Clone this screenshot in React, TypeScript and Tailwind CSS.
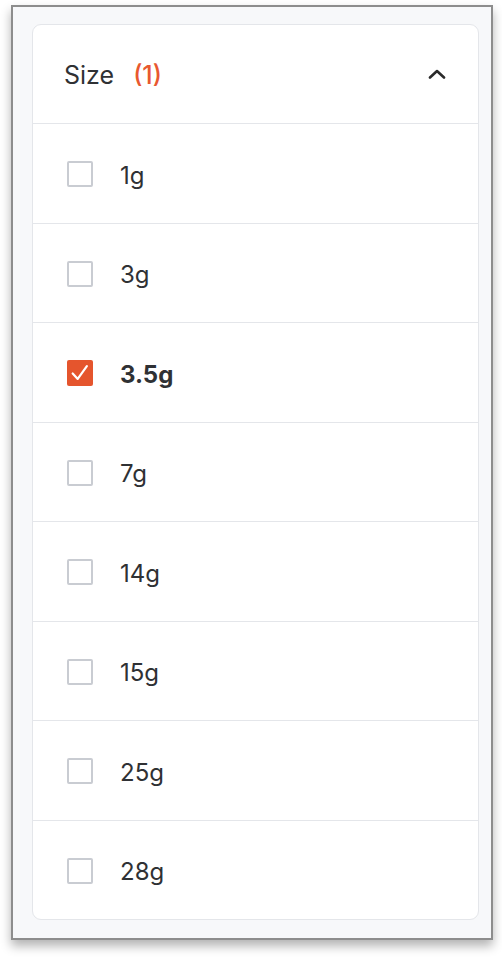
import React, { useState } from "react"

const sizes = ["1g", "3g", "3.5g", "7g", "14g", "15g", "25g", "28g"]

function Checkbox({ checked }: { checked: boolean }) {
  if (checked) {
    return (
      <span className="flex h-[26px] w-[26px] shrink-0 items-center justify-center rounded-[2px] bg-[#e5552d]">
        <svg viewBox="0 0 24 24" className="h-[22px] w-[22px]" fill="none" stroke="white" strokeWidth="2.4" strokeLinecap="round" strokeLinejoin="round">
          <polyline points="4,12.5 9.5,18.5 19.5,4.5" />
        </svg>
      </span>
    )
  }
  return <span className="h-[26px] w-[26px] shrink-0 rounded-[2px] border-2 border-[#c9ccd2] bg-white" />
}

export default function App() {
  const [selected, setSelected] = useState<string[]>(["3.5g"])

  const toggle = (s: string) =>
    setSelected((prev) => (prev.includes(s) ? prev.filter((x) => x !== s) : [...prev, s]))

  return (
    <div className="min-h-[958px] bg-white pl-[11px] pt-[5px]" style={{ fontFamily: "Inter, 'Noto Sans', sans-serif" }}>
      <div className="h-[935px] w-[482px] border-2 border-[#8d8d8d] bg-[#f7f8fa] pl-[19px] pr-[12px] pt-[17px] shadow-[0_6px_10px_rgba(0,0,0,0.3)]">
        <div className="overflow-hidden rounded-[9px] border border-[#e4e6ea] bg-white">
          {/* Header */}
          <div className="flex h-[98px] items-center justify-between pl-[31px] pr-[32px] pt-[4px]">
            <div className="flex items-center text-[25px] text-[#2f3134]">
              <span>Size</span>
              <span className="ml-[19px] font-medium text-[#e8582f]">(1)</span>
            </div>
            <svg viewBox="0 0 18 10" className="mb-[4px] h-[10px] w-[18px]" fill="none" stroke="#2b2b2b" strokeWidth="2.6" strokeLinecap="round" strokeLinejoin="round">
              <polyline points="2,8.5 9,2 16,8.5" />
            </svg>
          </div>

          {/* Options */}
          {sizes.map((s) => {
            const checked = selected.includes(s)
            return (
              <div
                key={s}
                onClick={() => toggle(s)}
                className="flex h-[99.5px] cursor-pointer items-center border-t border-[#e4e6ea] pl-[34px] pt-[2px]"
              >
                <Checkbox checked={checked} />
                <span className={`ml-[27px] pt-[3px] text-[24px] text-[#2f3134] ${checked ? "font-bold" : ""}`}>{s}</span>
              </div>
            )
          })}
        </div>
      </div>
    </div>
  )
}
